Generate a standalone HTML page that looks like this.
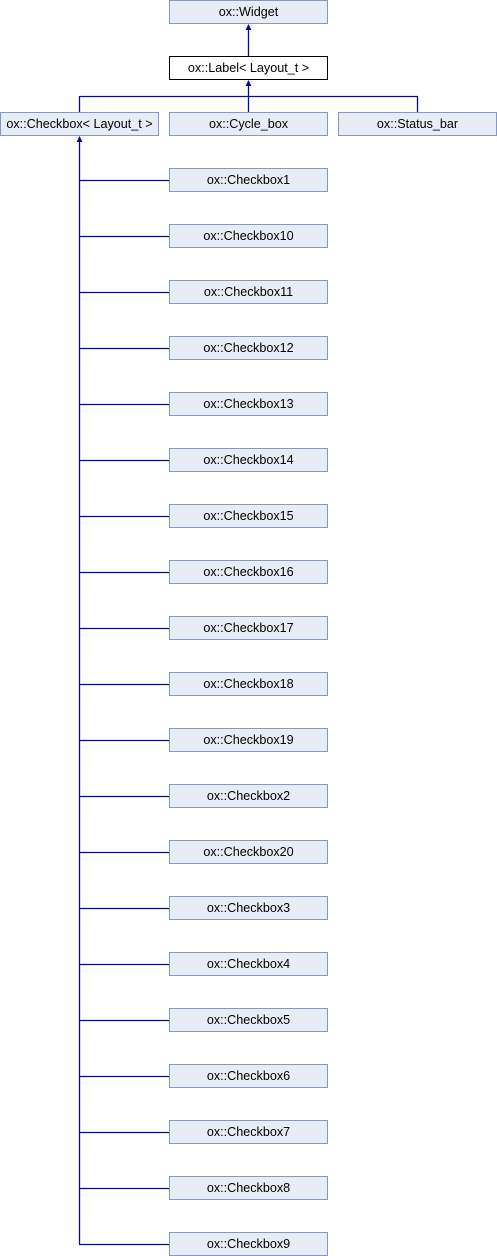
<!DOCTYPE html>
<html><head><style>
body{margin:0;width:497px;height:1256px;background:#fff;position:relative;font-family:"Liberation Sans",sans-serif;font-size:12.6px;overflow:hidden}
.b{position:absolute;box-sizing:border-box;height:24px;width:159px;background:#e8ecf5;border:1px solid #8497c9;text-align:center;line-height:22px;color:#000;white-space:nowrap}
svg{position:absolute;left:0;top:0}
</style></head><body>
<svg width="497" height="1256">
<g stroke="#0b0b8f" stroke-width="1.3" fill="none">
<line x1="248.5" y1="28" x2="248.5" y2="56"/>
<line x1="248.5" y1="84" x2="248.5" y2="112"/>
<line x1="79.5" y1="96.5" x2="417.5" y2="96.5"/>
<line x1="79.5" y1="96" x2="79.5" y2="112"/>
<line x1="417.5" y1="96" x2="417.5" y2="112"/>
<line x1="79.5" y1="140" x2="79.5" y2="1244"/>
</g>
<g fill="#0b0b8f">
<polygon points="248.5,24 245.5,30 251.5,30"/>
<polygon points="248.5,80 245.5,86 251.5,86"/>
<polygon points="79.5,136 76.5,142 82.5,142"/>
</g>
<g stroke="#0b0b8f" stroke-width="1.3">
<line x1="79" y1="180.5" x2="169" y2="180.5"/><line x1="79" y1="236.5" x2="169" y2="236.5"/><line x1="79" y1="292.5" x2="169" y2="292.5"/><line x1="79" y1="348.5" x2="169" y2="348.5"/><line x1="79" y1="404.5" x2="169" y2="404.5"/><line x1="79" y1="460.5" x2="169" y2="460.5"/><line x1="79" y1="516.5" x2="169" y2="516.5"/><line x1="79" y1="572.5" x2="169" y2="572.5"/><line x1="79" y1="628.5" x2="169" y2="628.5"/><line x1="79" y1="684.5" x2="169" y2="684.5"/><line x1="79" y1="740.5" x2="169" y2="740.5"/><line x1="79" y1="796.5" x2="169" y2="796.5"/><line x1="79" y1="852.5" x2="169" y2="852.5"/><line x1="79" y1="908.5" x2="169" y2="908.5"/><line x1="79" y1="964.5" x2="169" y2="964.5"/><line x1="79" y1="1020.5" x2="169" y2="1020.5"/><line x1="79" y1="1076.5" x2="169" y2="1076.5"/><line x1="79" y1="1132.5" x2="169" y2="1132.5"/><line x1="79" y1="1188.5" x2="169" y2="1188.5"/><line x1="79" y1="1244.5" x2="169" y2="1244.5"/>
</g>
</svg>
<div class="b" style="left:169px;top:0">ox::Widget</div>
<div class="b" style="left:169px;top:56px;background:#fff;border-color:#000">ox::Label&lt; Layout_t &gt;</div>
<div class="b" style="left:0;top:112px">ox::Checkbox&lt; Layout_t &gt;</div>
<div class="b" style="left:169px;top:112px">ox::Cycle_box</div>
<div class="b" style="left:338px;top:112px">ox::Status_bar</div>
<div class="b" style="left:169px;top:168px">ox::Checkbox1</div>
<div class="b" style="left:169px;top:224px">ox::Checkbox10</div>
<div class="b" style="left:169px;top:280px">ox::Checkbox11</div>
<div class="b" style="left:169px;top:336px">ox::Checkbox12</div>
<div class="b" style="left:169px;top:392px">ox::Checkbox13</div>
<div class="b" style="left:169px;top:448px">ox::Checkbox14</div>
<div class="b" style="left:169px;top:504px">ox::Checkbox15</div>
<div class="b" style="left:169px;top:560px">ox::Checkbox16</div>
<div class="b" style="left:169px;top:616px">ox::Checkbox17</div>
<div class="b" style="left:169px;top:672px">ox::Checkbox18</div>
<div class="b" style="left:169px;top:728px">ox::Checkbox19</div>
<div class="b" style="left:169px;top:784px">ox::Checkbox2</div>
<div class="b" style="left:169px;top:840px">ox::Checkbox20</div>
<div class="b" style="left:169px;top:896px">ox::Checkbox3</div>
<div class="b" style="left:169px;top:952px">ox::Checkbox4</div>
<div class="b" style="left:169px;top:1008px">ox::Checkbox5</div>
<div class="b" style="left:169px;top:1064px">ox::Checkbox6</div>
<div class="b" style="left:169px;top:1120px">ox::Checkbox7</div>
<div class="b" style="left:169px;top:1176px">ox::Checkbox8</div>
<div class="b" style="left:169px;top:1232px">ox::Checkbox9</div>
</body></html>
